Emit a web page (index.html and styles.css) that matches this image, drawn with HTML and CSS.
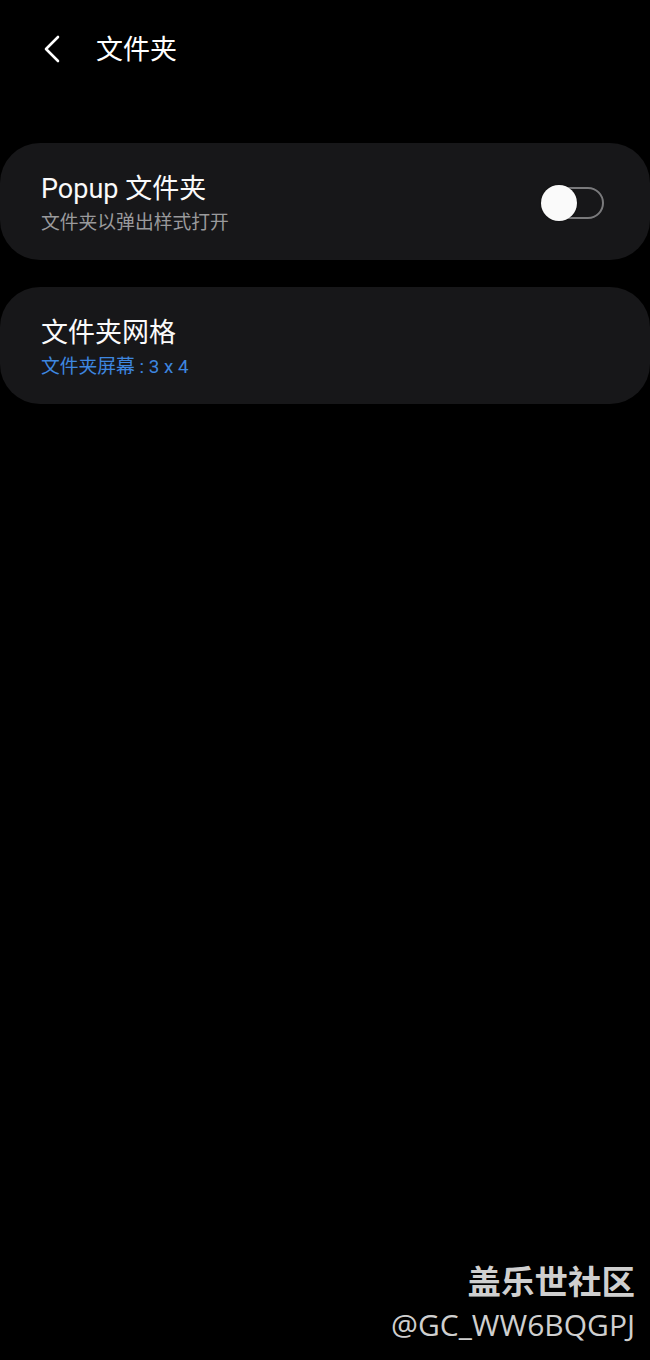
FILE: index.html
```html
<!DOCTYPE html>
<html lang="zh">
<head>
<meta charset="utf-8">
<link rel="stylesheet" href="styles.css">
</head>
<body>
<div class="page">
  <header class="topbar">
    <svg class="back" width="20" height="30" viewBox="0 0 20 30"><path d="M16 3 L4 15 L16 27" fill="none" stroke="#fff" stroke-width="2.6" stroke-linecap="round" stroke-linejoin="round"/></svg>
    <h1 class="title">文件夹</h1>
  </header>
  <section class="card">
    <div class="texts">
      <div class="primary">Popup 文件夹</div>
      <div class="secondary">文件夹以弹出样式打开</div>
    </div>
    <div class="switch"><div class="thumb"></div></div>
  </section>
  <section class="card">
    <div class="texts">
      <div class="primary">文件夹网格</div>
      <div class="secondary blue">文件夹屏幕 : 3 x 4</div>
    </div>
  </section>
  <div class="spacer"></div>
  <footer class="watermark">
    <div class="wm1">盖乐世社区</div>
    <div class="wm2">@GC_WW6BQGPJ</div>
  </footer>
</div>
</body>
</html>
```
FILE: styles.css
```css
html, body {
  margin: 0;
  padding: 0;
  background: #000;
}
body {
  font-family: Roboto, "Noto Sans CJK SC", sans-serif;
  color: #fff;
}
.page {
  width: 650px;
  height: 1360px;
  display: flex;
  flex-direction: column;
  overflow: hidden;
}
.topbar {
  height: 98px;
  display: flex;
  align-items: center;
  padding-left: 42px;
  padding-top: 2px;
  box-sizing: border-box;
}
.back {
  margin-top: -2px;
}
.title {
  margin: 0 0 0 34px;
  font-size: 27px;
  font-weight: 400;
  line-height: 1;
}
.card {
  margin-top: 45px;
  height: 117px;
  background: #171719;
  border-radius: 40px;
  display: flex;
  align-items: center;
  padding: 0 46px 0 41px;
  box-sizing: border-box;
}
.card + .card {
  margin-top: 27px;
}
.texts {
  flex: 1;
  display: flex;
  flex-direction: column;
  gap: 7px;
  margin-top: 6px;
}
.primary {
  font-size: 27px;
  line-height: 30px;
  color: #fafafa;
}
.secondary {
  font-size: 18.8px;
  line-height: 24px;
  color: #9a9a9c;
}
.secondary.blue {
  color: #3e87e0;
}
.switch {
  position: relative;
  width: 58px;
  height: 32px;
  border: 2px solid #7a7a7c;
  border-radius: 18px;
  box-sizing: border-box;
  margin-top: 2px;
}
.thumb {
  position: absolute;
  left: -7px;
  top: -4px;
  width: 36px;
  height: 36px;
  border-radius: 50%;
  background: #fafafa;
  box-shadow: 0 0 2px rgba(0,0,0,0.6);
}
.spacer {
  flex: 1;
}
.watermark {
  display: flex;
  flex-direction: column;
  align-items: flex-end;
  padding-right: 15px;
  padding-bottom: 15px;
}
.wm1 {
  font-family: "Noto Sans CJK SC", sans-serif;
  font-weight: 700;
  font-size: 33.5px;
  line-height: 49px;
  color: #cfcfcf;
}
.wm2 {
  font-family: "Open Sans", "Noto Sans", sans-serif;
  font-size: 30px;
  line-height: 41px;
  color: #cfcfcf;
}
```
